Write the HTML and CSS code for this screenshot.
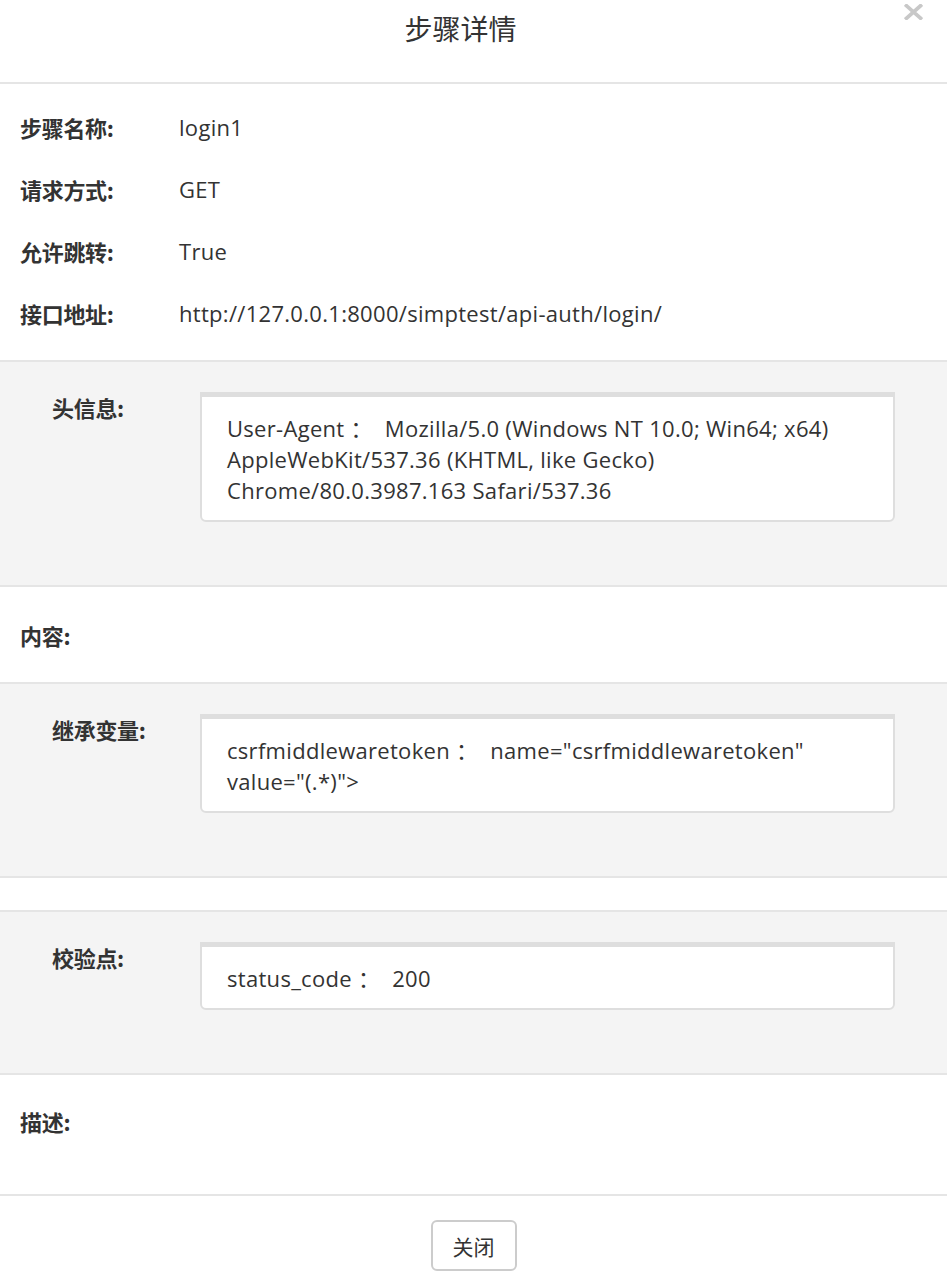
FILE: index.html
```html
<!DOCTYPE html>
<html lang="zh-CN">
<head>
<meta charset="utf-8">
<title>步骤详情</title>
<link rel="stylesheet" href="styles.css">
</head>
<body>
<div class="modal">
  <div class="modal-header">
    <h4 class="modal-title">步骤详情</h4>
    <button class="close" type="button" aria-label="Close">
      <svg width="19" height="16" viewBox="0 0 19 16"><path d="M2.5 1.8 L16.5 14.2 M16.5 1.8 L2.5 14.2" stroke="#c8c8c8" stroke-width="3.8" stroke-linecap="square"/></svg>
    </button>
  </div>
  <div class="modal-body">
    <div class="basic">
      <div class="row"><span class="label">步骤名称:</span><span class="value">login1</span></div>
      <div class="row"><span class="label">请求方式:</span><span class="value">GET</span></div>
      <div class="row"><span class="label">允许跳转:</span><span class="value">True</span></div>
      <div class="row"><span class="label">接口地址:</span><span class="value">http://127.0.0.1:8000/simptest/api-auth/login/</span></div>
    </div>
    <div class="block gray">
      <span class="glabel">头信息:</span>
      <div class="box">User-Agent ：  Mozilla/5.0 (Windows NT 10.0; Win64; x64) AppleWebKit/537.36 (KHTML, like Gecko) Chrome/80.0.3987.163 Safari/537.36</div>
    </div>
    <div class="block plain content"><span class="label">内容:</span></div>
    <div class="block gray">
      <span class="glabel">继承变量:</span>
      <div class="box">csrfmiddlewaretoken ：  name="csrfmiddlewaretoken" value="(.*)"&gt;</div>
    </div>
    <div class="block spacer"></div>
    <div class="block gray">
      <span class="glabel">校验点:</span>
      <div class="box">status_code ：  200</div>
    </div>
    <div class="block plain desc"><span class="label">描述:</span></div>
  </div>
  <div class="modal-footer">
    <button class="btn" type="button">关闭</button>
  </div>
</div>
</body>
</html>
```
FILE: styles.css
```css
* { box-sizing: border-box; }
html, body { margin: 0; padding: 0; background: #fff; }
body {
  font-family: "Open Sans", "Noto Sans CJK SC", sans-serif;
  color: #333;
  font-size: 22px;
}
.modal { width: 947px; }
.modal-header {
  display: flex;
  align-items: flex-start;
  padding: 8px 21px 34px 21px;
  border-bottom: 2px solid #e5e5e5;
}
.modal-title {
  flex: 1;
  margin: 0;
  text-align: center;
  font-family: "Noto Sans CJK SC", sans-serif;
  font-weight: normal;
  font-size: 28px;
  line-height: 40px;
  color: #333;
}
.close {
  width: 26px;
  margin: -4px 0 0 0;
  padding: 0;
  border: 0;
  background: none;
  display: flex;
  justify-content: center;
  cursor: pointer;
}
.basic { padding: 12px 0 16px 20px; }
.row { display: flex; align-items: center; height: 62px; }
.label {
  width: 159px;
  font-family: "Noto Sans CJK SC", sans-serif;
  font-weight: bold;
  font-size: 22px;
  line-height: 31px;
  letter-spacing: -0.3px;
  flex-shrink: 0;
}
.value { font-size: 22px; letter-spacing: 0.3px; }
.block { border-top: 2px solid #e5e5e5; }
.gray {
  background: #f4f4f4;
  display: flex;
  align-items: flex-start;
  padding: 30px 52px 63px 52px;
}
.glabel {
  width: 148px;
  flex-shrink: 0;
  font-family: "Noto Sans CJK SC", sans-serif;
  font-weight: bold;
  font-size: 22px;
  line-height: 31px;
  letter-spacing: -0.3px;
}
.box {
  flex: 1;
  background: #fff;
  border: 2px solid #dedede;
  border-top-width: 5px;
  border-radius: 0 0 6px 6px;
  padding: 16px 25px 14px 25px;
  font-size: 22px;
  line-height: 31px;
  letter-spacing: 0.3px;
  white-space: pre-wrap;
}
.plain { padding-left: 20px; }
.content { padding-top: 33px; padding-bottom: 31px; }
.spacer { height: 34px; }
.desc { padding-top: 31px; padding-bottom: 57px; }
.modal-footer {
  border-top: 2px solid #e5e5e5;
  display: flex;
  justify-content: center;
  padding-top: 24px;
  height: 93px;
}
.btn {
  width: 86px;
  height: 51px;
  border: 2px solid #ccc;
  border-radius: 6px;
  background: #fff;
  font-family: "Noto Sans CJK SC", sans-serif;
  font-size: 21px;
  color: #333;
  padding: 0;
}
```
